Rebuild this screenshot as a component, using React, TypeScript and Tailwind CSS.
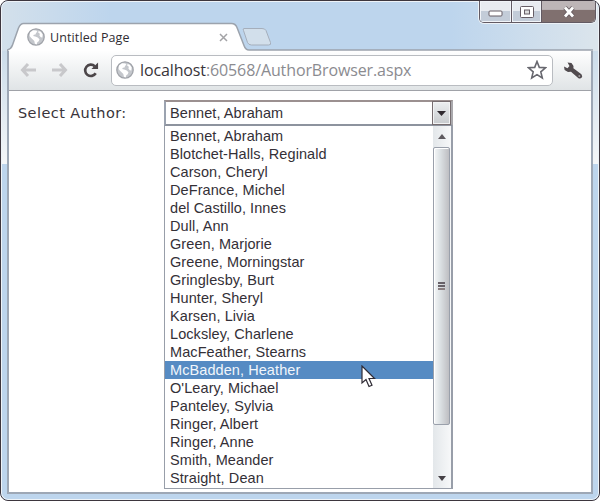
import React from "react";

const authors = [
  "Bennet, Abraham",
  "Blotchet-Halls, Reginald",
  "Carson, Cheryl",
  "DeFrance, Michel",
  "del Castillo, Innes",
  "Dull, Ann",
  "Green, Marjorie",
  "Greene, Morningstar",
  "Gringlesby, Burt",
  "Hunter, Sheryl",
  "Karsen, Livia",
  "Locksley, Charlene",
  "MacFeather, Stearns",
  "McBadden, Heather",
  "O'Leary, Michael",
  "Panteley, Sylvia",
  "Ringer, Albert",
  "Ringer, Anne",
  "Smith, Meander",
  "Straight, Dean",
];

function Globe() {
  return (
    <svg className="h-[18px] w-[18px] shrink-0" viewBox="0 0 18 18">
      <circle cx="9" cy="9" r="8.2" fill="#c4c7cc" stroke="#a0a3a9" strokeWidth="1.3" />
      <path
        d="M3 4.5 6 2.2l3.4.3 1 1.4-1.3.9-.6 1.6-1.7.4-.6 1.3 2 .3 2.5 1.2 1.8 1.6-.8 2-1.4 1-.6 2.3-1.8-.7-.6-2.7-1.500-1.600-1.800-1.800L2.600 8z"
        fill="#fff"
      />
      <path d="m11.500 3 2.300.8 1.900 2.800-.4 2.900-1.500-.3-1.400-1.600.5-1.800-1.600-1z" fill="#fff" />
    </svg>
  );
}

function NavArrow({ flip = false }: { flip?: boolean }) {
  return (
    <svg className={flip ? "h-4 w-[17px] -scale-x-100" : "h-4 w-[17px]"} viewBox="0 0 17 16">
      <path d="M8 2 2.500 8 8 14M3 8h13" fill="none" stroke="#c8c8cb" strokeWidth="3" />
    </svg>
  );
}

function WindowControls() {
  return (
    <div className="absolute top-0 right-[3px] flex h-[22px] w-[117px] overflow-hidden rounded-b-[5px] border border-t-0 border-[#625a63] text-white shadow-[0_0_0_1px_#edf2f7]">
      <div className="flex w-8 items-center justify-center border-r border-[#625a63] bg-linear-to-b from-[#e8ebf0] from-50% to-[#c3ccd8] to-50% shadow-[inset_0_0_0_1px_#f1f4f8]">
        <svg className="mt-1 h-[7px] w-4" viewBox="0 0 16 7">
          <rect x="1" y="1" width="13" height="5" rx="1" fill="#fff" stroke="#665d65" />
        </svg>
      </div>
      <div className="flex w-[30px] items-center justify-center border-r border-[#625a63] bg-linear-to-b from-[#e8ebf0] from-50% to-[#c3ccd8] to-50% shadow-[inset_0_0_0_1px_#f1f4f8]">
        <svg className="h-3 w-[14px]" viewBox="0 0 14 12">
          <rect x=".5" y=".5" width="13" height="11" rx="1" fill="#fff" stroke="#665d65" />
          <rect x="4.500" y="4" width="5" height="4" fill="#ddd" stroke="#665d65" />
        </svg>
      </div>
      <div className="flex flex-1 items-center justify-center bg-linear-to-b from-[#bdb5b7] from-40% to-[#80706f] to-45%">
        <svg className="h-3 w-[14px]" viewBox="0 0 14 12">
          <path d="m3 1.500 8 9m0-9-8 9" stroke="#665b60" strokeWidth="4.500" />
          <path d="m3 1.500 8 9m0-9-8 9" stroke="#fff" strokeWidth="2.800" />
        </svg>
      </div>
    </div>
  );
}

function TabStrip() {
  return (
    <header className="relative h-[49px] shrink-0">
      <svg className="absolute top-[21px] left-[6px] h-[29px] w-[588px]" viewBox="0 0 588 29">
        <path
          d="M.5 29v-1c3-1 4-2 5-5l6-17q2-4.500 5-4.500h208q4 0 5.500 4l7 18q1.500 4.500 5 4.500H586V29z"
          fill="#fff"
        />
        <path
          d="M.5 29v-1c3-1 4-2 5-5l6-17q2-4.500 5-4.500h208q4 0 5.500 4l7 18q1.500 4.500 5 4.500H586"
          fill="none"
          stroke="#9ca3ad"
          strokeWidth="1.500"
        />
        <path
          d="M237 6.500h18q3 0 4 2l4.500 12q1 2.500-2 2.500h-17q-3 0-4-2.500l-4-12q-1-2 .5-2z"
          fill="#d2dfeb"
          stroke="#a5aebb"
        />
      </svg>
      <div className="relative flex h-full items-start pt-[27px] pl-[26px]">
        <Globe />
        <span className="ml-[5px] font-['Open_Sans','Noto_Sans',sans-serif] text-[12.500px] leading-[19px] tracking-[0.110px] whitespace-nowrap text-[#302c32]">
          Untitled Page
        </span>
        <svg className="mt-[5px] mr-[371px] ml-auto h-[9px] w-[9px]" viewBox="0 0 9 9">
          <path d="m1 1 7 7m0-7L1 8" stroke="#a3a3a6" strokeWidth="1.500" />
        </svg>
      </div>
      <WindowControls />
    </header>
  );
}

function Toolbar() {
  return (
    <div className="flex h-[41px] shrink-0 items-center border-b border-[#a0a2a8] bg-linear-to-b from-white to-[#e0e4e6] pl-[11px]">
      <NavArrow />
      <div className="ml-[14px] flex">
        <NavArrow flip />
      </div>
      <svg className="ml-[14px] h-[18px] w-[17px]" viewBox="0 0 18 18">
        <path d="M14.500 12.500A6 6 0 1 1 13.500 5" fill="none" stroke="#4c4649" strokeWidth="2.800" />
        <path d="M17 1v7h-7z" fill="#4c4649" />
      </svg>
      <div className="ml-3 flex h-[31px] w-[442px] items-center rounded-[5px] border border-[#b9bcc1] bg-white pr-[5px] pl-[4px]">
        <Globe />
        <span className="ml-[6px] font-['Open_Sans','Noto_Sans',sans-serif] text-[16px] leading-5 tracking-[-0.120px] whitespace-nowrap text-[#8b8b90]">
          <span className="text-[#38343a]">localhost</span>:60568/AuthorBrowser.aspx
        </span>
        <svg className="ml-auto h-5 w-5" viewBox="0 0 20 20">
          <path
            d="m10 1.500 2.300 5.900 6.200.4-4.700 4 1.500 6.200-5.300-3.400L4.700 18l1.500-6.200-4.700-4 6.200-.4z"
            fill="#fff"
            stroke="#68686f"
            strokeWidth="1.600"
          />
        </svg>
      </div>
      <svg className="ml-[10px] h-[19px] w-5" viewBox="0 0 20 19">
        <path
          d="M4.500 1.500 8.500 2l2 3-.1 2.300 8 6q1.600 2 .2 3.500-1.700 1.600-3.700-.1L8 10.700l-3 .2-3.400-2L1 5.500l3.500 1.700L6.500 5z"
          fill="#514b4f"
        />
        <circle cx="16.300" cy="15" r="1" fill="#a09a9d" />
      </svg>
    </div>
  );
}

function Scrollbar() {
  return (
    <div className="flex w-[18px] flex-col bg-linear-to-r from-[#e3e7ea] to-[#f7f8f9]">
      <div className="flex h-[21px] items-center justify-center">
        <svg className="h-[5px] w-2" viewBox="0 0 8 5">
          <path d="M0 5 4 0l4 5z" fill="#5e5a5f" />
        </svg>
      </div>
      <div className="flex h-[278px] w-[17px] flex-col items-center justify-center gap-px rounded-[2px] border border-[#9aa0ab] bg-linear-to-r from-[#f5f7f8] via-[#dde2e5] via-40% to-[#bebec2] shadow-[inset_1px_1px_0_#fff]">
        <div className="h-[2px] w-[7px] bg-[#686168]" />
        <div className="h-[2px] w-[7px] bg-[#686168]" />
        <div className="h-[2px] w-[7px] bg-[#8a7e80]" />
      </div>
      <div className="mt-auto flex h-5 items-center justify-center">
        <svg className="h-[5px] w-2" viewBox="0 0 8 5">
          <path d="m0 0 4 5 4-5z" fill="#454045" />
        </svg>
      </div>
    </div>
  );
}

function AuthorSelect() {
  return (
    <div className="w-[289px] font-['Liberation_Sans',Arial,sans-serif] text-[14.500px] leading-[19px] tracking-[0.080px] text-[#343037]">
      <div className="flex h-[26px] items-center justify-between border-2 border-t-[#9b9090] border-r-[#aaa9ad] border-b-[#8d939e] border-l-[#9ba3b0] bg-white pl-1">
        <span>Bennet, Abraham</span>
        <span className="flex h-6 w-[19px] items-center justify-center border border-[#766d70] bg-linear-to-b from-[#eceff1] to-[#c8cbce] shadow-[inset_0_0_0_1px_#f2f3f4]">
          <svg className="h-[5px] w-[9px]" viewBox="0 0 9 5">
            <path d="m0 0 4.500 5L9 0z" fill="#302a30" />
          </svg>
        </span>
      </div>
      <div className="flex h-[363px] justify-between border border-t-0 border-r-2 border-[#989ea9] bg-white">
        <ul className="w-[268px] pt-px">
          {authors.map((name) => (
            <li
              key={name}
              className={
                name === "McBadden, Heather"
                  ? "h-[18px] bg-[#568bc3] pl-[5px] text-[#f1f6fb]"
                  : "h-[18px] pl-[5px]"
              }
            >
              {name}
            </li>
          ))}
        </ul>
        <Scrollbar />
      </div>
    </div>
  );
}

export default function App() {
  return (
    <div className="h-[501px] w-[600px] bg-white">
      <div className="relative flex h-full w-full flex-col overflow-hidden rounded-[8px] border border-[#3d363e] bg-[#bdd5ed]">
        <div className="flex h-full flex-col rounded-[7px] bg-[linear-gradient(to_right,#d3e0eb_0px,#bdd5ed_110px,#bdd5ed_450px,#dce5ec_600px),linear-gradient(#cbdcea,#f4f6f8)] bg-[length:100%_50px,100%_113px] bg-[position:0_0,0_50px] bg-no-repeat shadow-[inset_0_0_0_1px_#eef3f8]">
          <TabStrip />
          <div className="mx-[6px] mb-[6px] flex min-h-0 flex-1 flex-col border-x-2 border-b-2 border-[#9da7b5] bg-white">
            <Toolbar />
            <main className="flex items-start pt-[9px] pl-[9px]">
              <label className="w-[146px] pt-1 font-['DejaVu_Sans',Verdana,sans-serif] text-[14.500px] leading-[19px] tracking-[0.420px] text-[#39343a]">
                Select Author:
              </label>
              <AuthorSelect />
            </main>
          </div>
        </div>
        <svg className="absolute top-[364px] left-[360px] h-[23px] w-[15px]" viewBox="0 0 15 23">
          <path
            d="M1 1v17l4-3.500 3 7 3-1.300-3-6.700h5.500z"
            fill="#fff"
            stroke="#302c35"
            strokeWidth="1.200"
          />
        </svg>
      </div>
    </div>
  );
}
